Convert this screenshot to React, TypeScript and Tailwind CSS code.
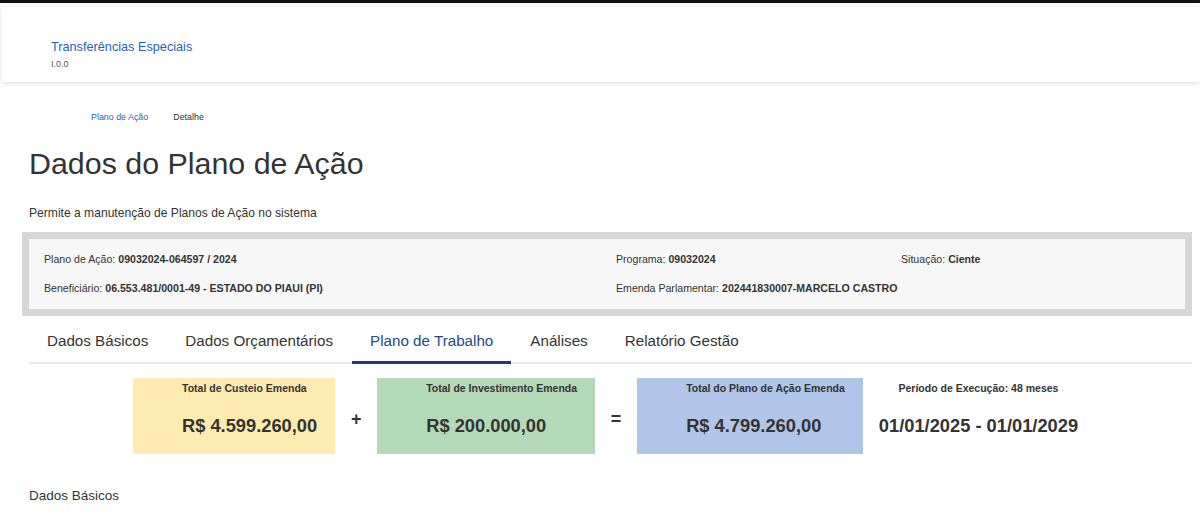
import React from 'react';

const font = { fontFamily: '"Liberation Sans", Arial, sans-serif' };

type Info = { label: string; value: string };

const infoRows: Info[][] = [
  [
    { label: 'Plano de Ação:', value: '09032024-064597 / 2024' },
    { label: 'Programa:', value: '09032024' },
    { label: 'Situação:', value: 'Ciente' },
  ],
  [
    { label: 'Beneficiário:', value: '06.553.481/0001-49 - ESTADO DO PIAUI (PI)' },
    { label: 'Emenda Parlamentar:', value: '202441830007-MARCELO CASTRO' },
  ],
];

const tabs = ['Dados Básicos', 'Dados Orçamentários', 'Plano de Trabalho', 'Análises', 'Relatório Gestão'];

function TotalCard({ label, value, color }: { label: string; value: string; color: string }) {
  return (
    <div className={`flex h-[76px] flex-col pl-[49px] pr-[18px] pt-[4px] ${color}`}>
      <span className="text-[10.5px] font-bold leading-[13px] text-[#333]">{label}</span>
      <span className="mt-[20px] text-[18.3px] font-bold leading-[22px] text-[#333]">{value}</span>
    </div>
  );
}

function Operator({ sign }: { sign: string }) {
  return (
    <div className="flex w-[42px] items-center justify-center pt-[6px] text-[18px] font-bold text-[#333]">
      {sign}
    </div>
  );
}

export default function App() {
  return (
    <div className="min-h-[523px] w-[1200px] overflow-hidden bg-white text-[#333]" style={font}>
      {/* top bar */}
      <div className="h-[3px] bg-[#111]" />

      {/* ── Header ─────────────────────────────── */}
      <div className="pl-[2px] pt-[4px]">
        <div className="h-[75px] bg-white pl-[49px] pt-[32px] shadow-[0_1px_5px_rgba(0,0,0,0.14)]">
          <div className="text-[12.7px] leading-[16px] text-[#2b5fb3]">Transferências Especiais</div>
          <div className="mt-[3px] text-[9px] leading-[12px] text-[#555]">I.0.0</div>
        </div>
      </div>

      <div className="pl-[29px]">
        {/* Breadcrumb */}
        <div className="mt-[29px] flex gap-[25px] pl-[62px] text-[8.9px] leading-[12px]">
          <span className="text-[#2f62b5]">Plano de Ação</span>
          <span className="text-[#333]">Detalhe</span>
        </div>

        <h1 className="mt-[22px] text-[30.4px] leading-[36px] text-[#333]">Dados do Plano de Ação</h1>
        <p className="mt-[24px] text-[12.1px] leading-[16px] text-[#333]">
          Permite a manutenção de Planos de Ação no sistema
        </p>
      </div>

      {/* Info box */}
      <div className="ml-[22px] mt-[11px] w-[1170px] border-[7px] border-[#d6d6d6] bg-[#f7f7f7] pb-[14px] pl-[15px] pt-[13px]">
        {infoRows.map((row, i) => (
          <div key={i} className={`grid grid-cols-[572px_285px_1fr] text-[10.6px] leading-[14px] ${i > 0 ? 'mt-[15px]' : ''}`}>
            {row.map((item) => (
              <div key={item.label}>
                {item.label} <span className="font-bold">{item.value}</span>
              </div>
            ))}
          </div>
        ))}
      </div>

      {/* Tabs */}
      <div className="ml-[29px] mt-[5px] flex w-[1163px] border-b-2 border-[#e8e8e8]">
        {tabs.map((t) => {
          const active = t === 'Plano de Trabalho';
          return (
            <div
              key={t}
              className={`-mb-[2px] mr-[1px] border-b-[3px] px-[18px] pb-[10px] pt-[10px] text-[15.2px] leading-[20px] ${
                active ? 'border-[#1d3b6e] text-[#244a85]' : 'border-transparent text-[#333]'
              }`}
            >
              {t}
            </div>
          );
        })}
      </div>

      {/* Totals */}
      <div className="ml-[133px] mt-[14px] flex">
        <TotalCard label="Total de Custeio Emenda" value="R$ 4.599.260,00" color="bg-[#feebb1]" />
        <Operator sign="+" />
        <TotalCard label="Total de Investimento Emenda" value="R$ 200.000,00" color="bg-[#b4d9b7]" />
        <Operator sign="=" />
        <TotalCard label="Total do Plano de Ação Emenda" value="R$ 4.799.260,00" color="bg-[#b0c5e7]" />
        <div className="flex flex-col items-center px-[16px] pt-[4px]">
          <span className="text-[10.5px] font-bold leading-[13px]">Período de Execução: 48 meses</span>
          <span className="mt-[20px] text-[18.3px] font-bold leading-[22px]">01/01/2025 - 01/01/2029</span>
        </div>
      </div>

      <div className="ml-[29px] mt-[33px] text-[13.5px] leading-[18px] text-[#333]">Dados Básicos</div>
    </div>
  );
}
